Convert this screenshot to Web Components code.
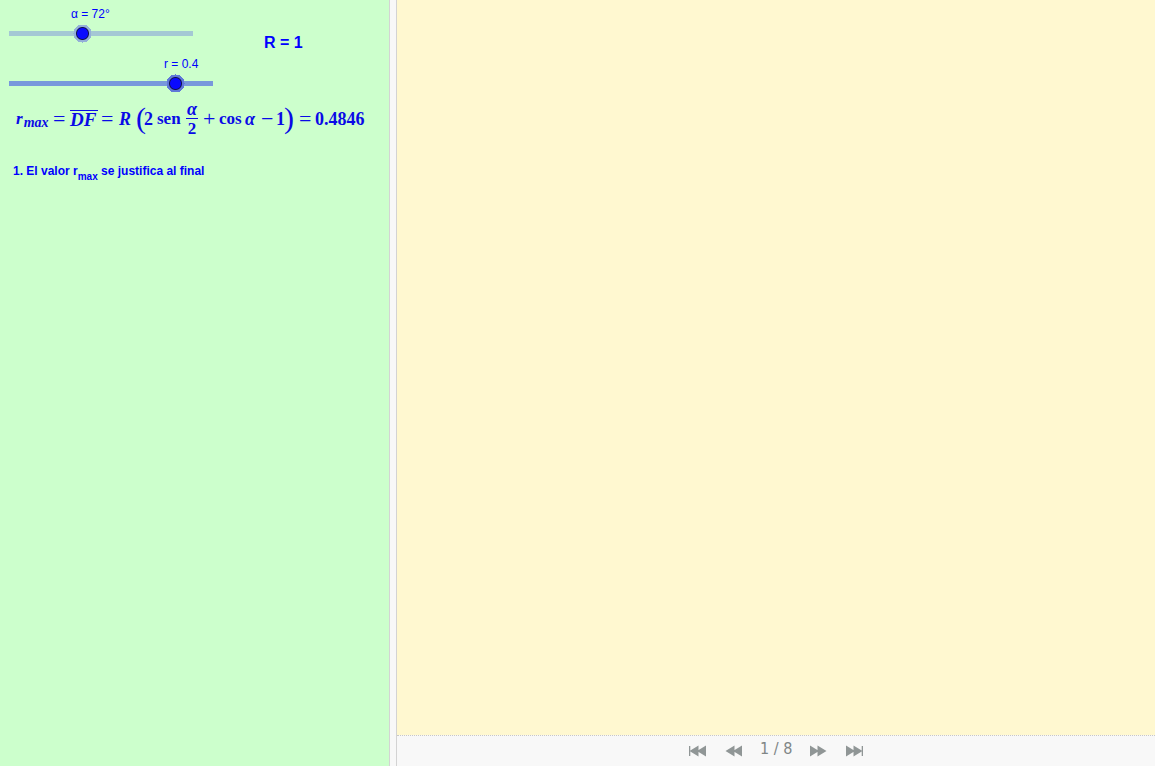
<!DOCTYPE html>
<html lang="es">
<head>
<meta charset="utf-8">
<title>Construcción paso a paso</title>
<style>
html, body { height: 100%; margin: 0; background: #fff; font-family: "Liberation Sans", Arial, sans-serif; }
body { box-sizing: border-box; padding: 0 2px 2px 0; }
</style>
</head>
<body>
<geo-applet></geo-applet>
<script>
const define = (name, html, setup) => customElements.define(name, class extends HTMLElement {
  connectedCallback() {
    if (this.shadowRoot) return;
    const t = document.createElement('template');
    t.innerHTML = html;
    this.attachShadow({ mode: 'open' }).append(t.content.cloneNode(true));
    if (setup) setup(this, this.shadowRoot);
  }
});

define('geo-slider', `
<style>
:host { display: block; height: 50px; color: #0000ff; }
label { display: block; box-sizing: border-box; height: 24px; padding: 7px 0 0 var(--label-start); font-size: 12px; line-height: 14px; white-space: nowrap; }
input { appearance: none; display: block; width: 100%; height: 19px; margin: 0; background: none; }
input::-webkit-slider-runnable-track { height: 19px; background: linear-gradient(var(--track), var(--track)) center / calc(100% - 18px) 5px no-repeat; }
input::-webkit-slider-thumb { appearance: none; width: 19px; height: 19px; background: radial-gradient(circle, #0a0aff 5px, #101050 6px, #101050 6px, var(--halo) 7px, var(--halo) 9px, transparent 9px); }
</style>
<label for="s"></label><input id="s" type="range" step="any">`, (el, root) => {
  root.querySelector('label').textContent = el.getAttribute('label');
  const i = root.querySelector('input');
  i.max = el.getAttribute('max');
  i.value = el.getAttribute('value');
});

define('geo-formula', `
<style>
:host { display: grid; grid-template-columns: 37px 17px 31px 18px 17px 8px 13px 29px 17px 16px 26px 16px 15px 8px 15px 16px auto; align-items: center; height: 42px; color: #0a0ae6; font: bold 17px/20px "Liberation Serif", serif; white-space: nowrap; }
i { font-style: italic; }
sub { margin-left: 1px; font-size: 14px; line-height: 0; vertical-align: -3px; }
.op { font-size: 22px; font-weight: normal; }
.par { font-size: 30px; font-weight: normal; line-height: 30px; padding-bottom: 2px; }
.num, .big { font-size: 18px; }
.seg { justify-self: start; width: 28px; font-size: 19px; border-top: 1px solid; line-height: 17px; }
.frac { justify-self: start; width: 12px; text-align: center; }
.frac span { display: block; line-height: 18px; }
.frac span:first-child { line-height: 18px; font-size: 18px; }
.frac span + span { border-top: 1px solid; padding-top: 1px; }
</style>
<span><i>r</i><sub><i>max</i></sub></span><span class="op">=</span><i class="seg">DF</i><span class="op">=</span><i class="big">R</i><span class="par">(</span><span class="num">2</span><span>sen</span><span class="frac"><span><i>α</i></span><span>2</span></span><span class="op">+</span><span>cos</span><i class="big">α</i><span class="op">−</span><span class="num">1</span><span class="par">)</span><span class="op">=</span><span class="num">0.4846</span>`);

define('geo-controls', `
<style>
:host { display: block; background: #ccffcc; border-right: 1px solid #d3d3d3; color: #0000ff; overflow: hidden; }
.top { display: flex; height: 98px; }
.sliders { width: 222px; }
.alpha { width: 202px; --track: #a4c8d4; --halo: #94b0d8; --label-start: 71px; }
.radius { --track: #7898dc; --halo: #6078d8; --label-start: 164px; }
.value { margin: 0 0 0 42px; padding-top: 33px; font: bold 16px/20px "Liberation Sans", sans-serif; }
geo-formula { margin-left: 16px; }
.note { margin: 24px 0 0 13px; font: bold 12px/14px "Liberation Sans", sans-serif; white-space: nowrap; }
.note sub { font-size: 10px; line-height: 0; vertical-align: -5px; }
</style>
<div class="top"><div class="sliders">
<geo-slider class="alpha" label="α = 72°" max="180" value="72"></geo-slider>
<geo-slider class="radius" label="r = 0.4" max="0.49" value="0.4"></geo-slider>
</div><p class="value">R = 1</p></div>
<geo-formula></geo-formula>
<p class="note">1. El valor r<sub>max</sub> se justifica al final</p>`);

define('step-button', `
<style>
:host { display: block; }
button { display: block; width: 20px; height: 20px; padding: 0; border: 0; background: none; color: #909696; }
:host([flip]) svg { transform: scaleX(-1); }
svg { display: block; }
</style>
<button type="button"><svg width="20" height="20" viewBox="0 0 20 20" fill="currentColor" aria-hidden="true"><path class="bar" d="M1 5h1.3v10H1z"/><path d="M10.5 4.6v10.8L1.5 10zM18 4.6v10.8L9 10z"/></svg></button>`, (el, root) => {
  root.querySelector('button').setAttribute('aria-label', el.getAttribute('label'));
  if (!el.hasAttribute('end')) root.querySelector('.bar').remove();
});

define('step-bar', `
<style>
:host { display: flex; justify-content: center; align-items: center; box-sizing: border-box; height: 31px; border-top: 1px dotted #c8c8c8; background: #f8f8f8; }
.count { width: 32px; margin: 0 16px; padding-bottom: 5px; color: #808686; font: 16px/20px "DejaVu Sans Condensed", "DejaVu Sans", sans-serif; font-stretch: condensed; white-space: nowrap; }
.gap { margin-right: 16px; }
.gap-left { margin-left: 16px; }
</style>
<step-button class="gap" end label="Primer paso"></step-button><step-button label="Paso anterior"></step-button>
<span class="count">1 / 8</span>
<step-button flip label="Paso siguiente"></step-button><step-button class="gap-left" flip end label="Último paso"></step-button>`);

define('geo-applet', `
<style>
:host { display: grid; grid-template-columns: minmax(0, 390fr) 6px minmax(0, 759fr); height: 100%; background: #f8f8f8; }
.view { display: flex; flex-direction: column; border-left: 1px solid #d3d3d3; }
.canvas { flex: 1; background: #fff8d0; }
</style>
<geo-controls></geo-controls><div></div>
<div class="view"><div class="canvas"></div><step-bar></step-bar></div>`);
</script>
</body>
</html>
